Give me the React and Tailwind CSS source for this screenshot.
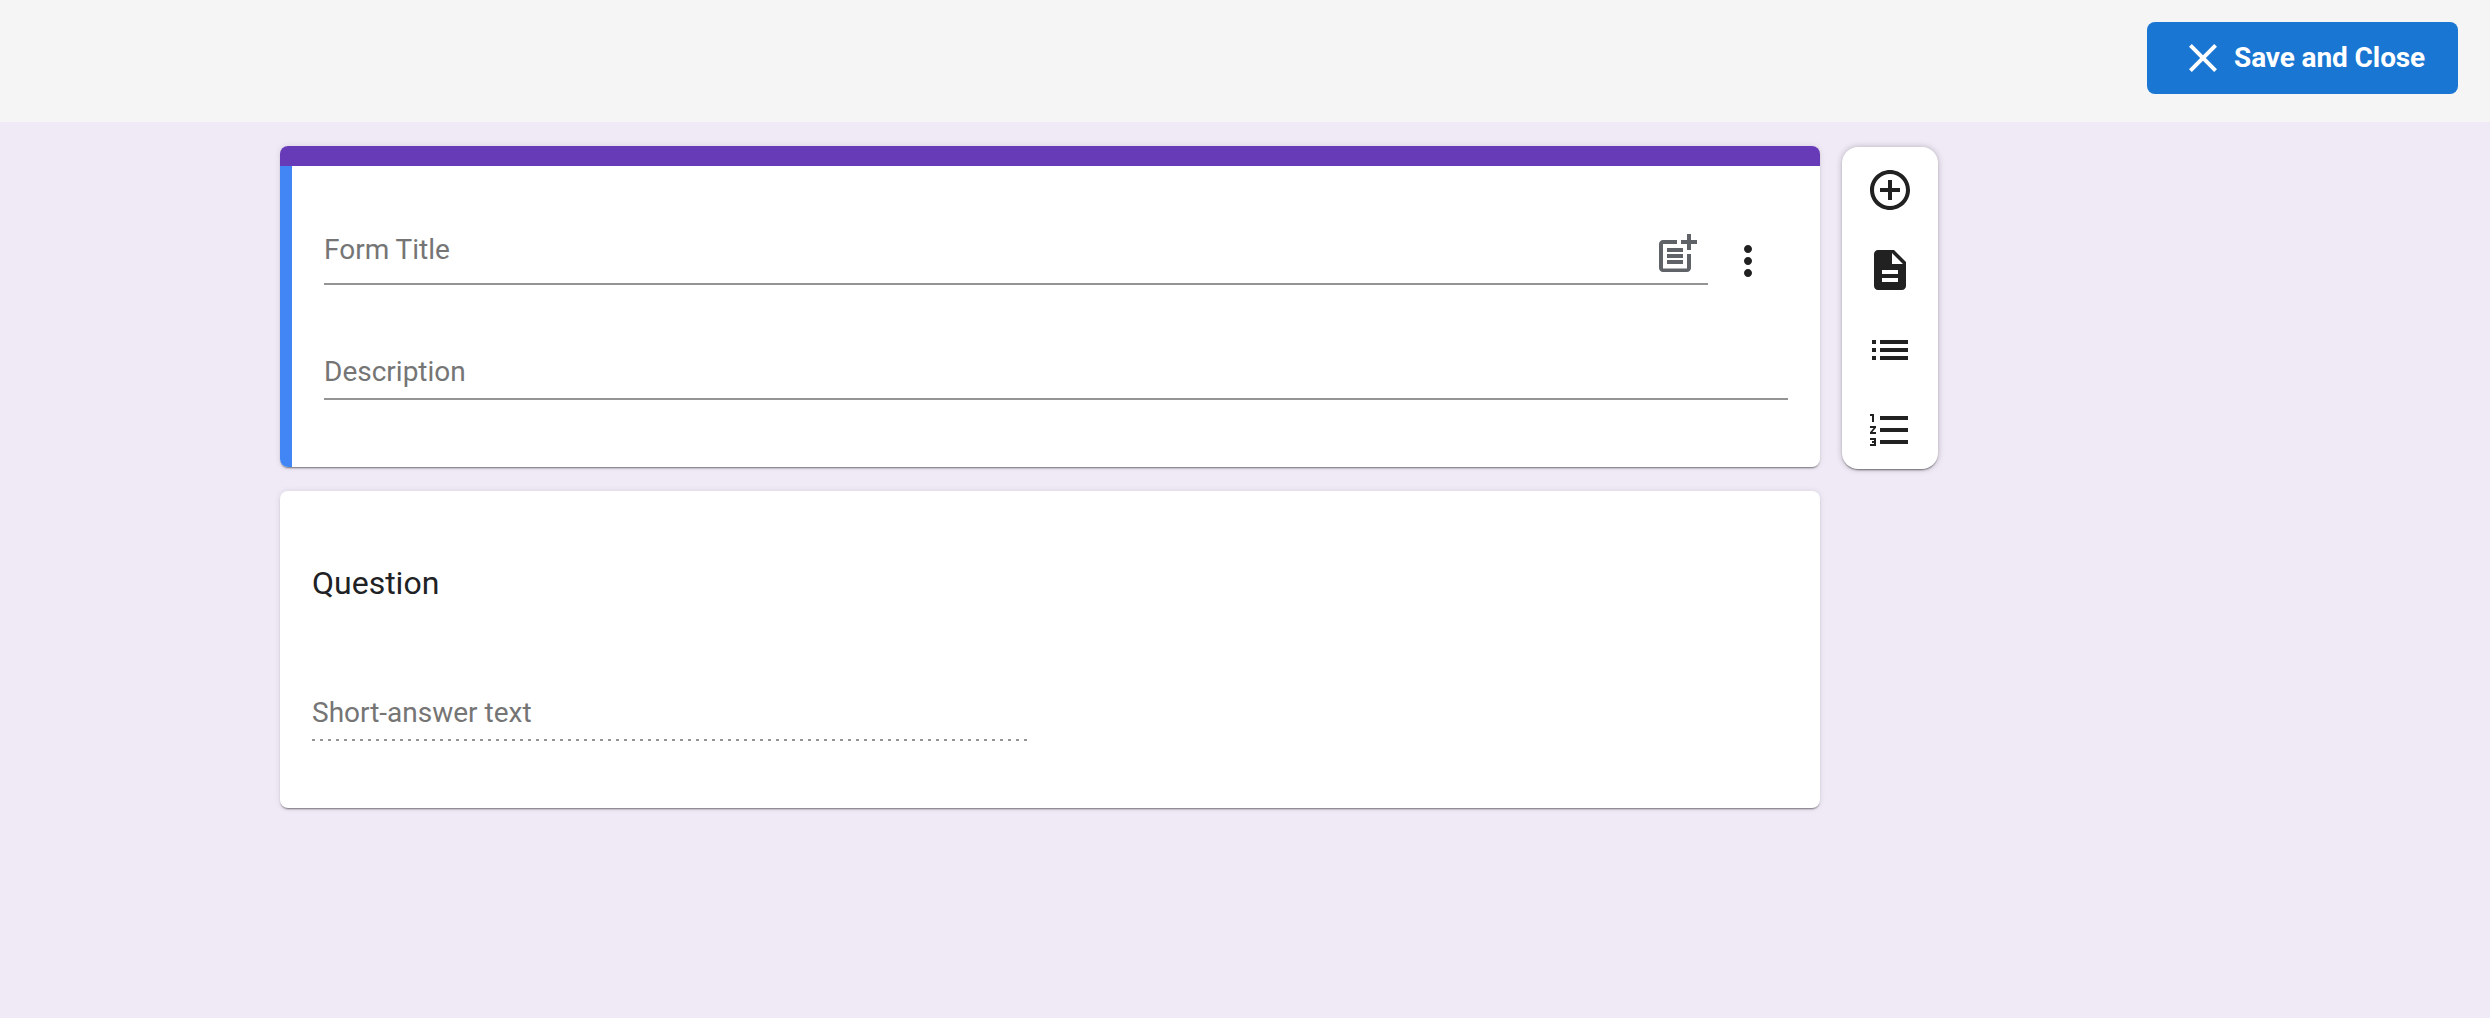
import React from 'react';
import { MdAddCircleOutline, MdClose, MdDescription, MdFormatListNumbered, MdList, MdMoreVert, MdPostAdd } from 'react-icons/md';

const ToolButton = ({ icon: Icon, label }) => (
  <button aria-label={label} className="flex h-12 w-12 items-center justify-center text-[#212121]">
    <Icon className="h-12 w-12" />
  </button>
);

const App = () => {
  return (
    <div className="min-h-[1018px] bg-[#f0eaf7] font-['Roboto',sans-serif]">
      {/* Top bar */}
      <header className="flex h-[122px] items-start justify-end bg-[#f5f5f5] pr-8 pt-[22px]">
        <button className="flex h-[72px] w-[311px] items-center gap-[7px] rounded-lg bg-[#1976d2] pl-[32px] text-[28px] font-bold tracking-[-0.1px] text-white">
          <MdClose className="h-12 w-12" />
          Save and Close
        </button>
      </header>

      <main className="flex items-start gap-[22px] pl-[280px] pt-6">
        <div className="flex w-[1540px] flex-col gap-6">
          {/* Form header card */}
          <section className="h-[321px] overflow-hidden rounded-lg bg-white shadow-[0_2px_2px_-1px_rgba(0,0,0,0.5),0_0_6px_rgba(0,0,0,0.1)]">
            <div className="h-5 bg-[#673ab7]" />
            <div className="h-[301px] border-l-12 border-[#4285f4] pl-8 pr-8">
              <div className="flex items-start">
                <div className="flex h-[119px] w-[1384px] items-start justify-between border-b-2 border-[#949494] pr-[7px] pt-[63px]">
                  <span className="text-[28px] leading-[42px] text-[#757575]">Form Title</span>
                  <MdPostAdd className="mt-px h-12 w-12 text-[#5f6368]" />
                </div>
                <MdMoreVert className="ml-4 mt-[71px] h-12 w-12 text-[#212121]" />
              </div>
              <div className="flex h-[115px] items-end border-b-2 border-[#949494] pb-[5px]">
                <span className="text-[28px] leading-[42px] text-[#757575]">Description</span>
              </div>
            </div>
          </section>

          {/* Question card */}
          <section className="h-[317px] rounded-lg bg-white px-8 pt-[69px] shadow-[0_2px_2px_-1px_rgba(0,0,0,0.5),0_0_6px_rgba(0,0,0,0.1)]">
            <div className="text-[32px] leading-[46px] text-[#202124]">Question</div>
            <div className="mt-[86px] w-[716px]">
              <div className="pb-[5px] text-[28px] leading-[42px] text-[#757575]">Short-answer text</div>
              <div className="h-[2px] bg-[repeating-linear-gradient(to_right,#949494_0,#949494_3px,transparent_3px,transparent_8px)]" />
            </div>
          </section>
        </div>

        {/* Side toolbar */}
        <aside className="mt-px flex h-[322px] w-24 flex-col items-center gap-8 rounded-2xl bg-white pt-[19px] shadow-[0_2px_2px_-1px_rgba(0,0,0,0.5),0_0_6px_rgba(0,0,0,0.25)]">
          <ToolButton icon={MdAddCircleOutline} label="Add question" />
          <ToolButton icon={MdDescription} label="Add section" />
          <ToolButton icon={MdList} label="Add list" />
          <ToolButton icon={MdFormatListNumbered} label="Add numbered list" />
        </aside>
      </main>
    </div>
  );
};

export default App;
